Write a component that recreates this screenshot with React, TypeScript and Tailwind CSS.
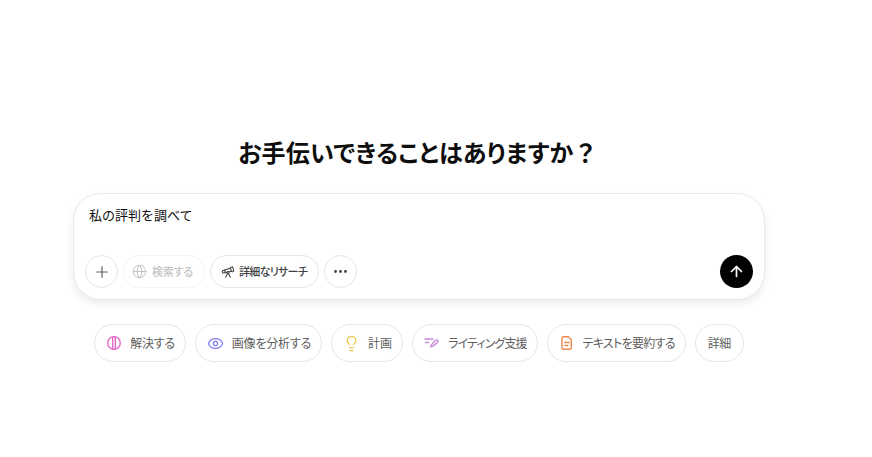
import { Plus, Globe, Telescope, Ellipsis, ArrowUp, Eye, Lightbulb } from "lucide-react";

function Chip({ icon, label, tight }: { icon?: React.ReactNode; label: string; tight?: string }) {
  return (
    <div className={`flex h-[38px] items-center gap-[8px] rounded-full border border-[#e6e6e6] bg-white ${icon ? "pl-[11px] pr-[10px]" : "px-[12px]"} text-[12px] text-[#5d5d5d]`}>
      {icon}
      <span className={tight}>{label}</span>
    </div>
  );
}

export default function App() {
  return (
    <div className="h-[457px] w-[872px] overflow-hidden bg-white font-['Noto_Sans_CJK_JP',sans-serif] text-[#0d0d0d] [font-feature-settings:'palt']">
      <div className="flex w-[838px] flex-col items-center pt-[134px]">
        <h1 className="ml-[-2px] h-[38px] text-[24px] font-semibold leading-[36px] tracking-[0.25px]">お手伝いできることはありますか<span className="[font-feature-settings:normal]">？</span></h1>
        <div className="mt-[21px] flex h-[107px] w-[692px] flex-col justify-between rounded-[28px] border border-[#e9e9e9] bg-white pb-[11px] pl-[11px] pr-[11px] pt-[11px] shadow-[0_4px_8px_rgba(0,0,0,0.08)]">
          <div className="pl-[4px] text-[13px] leading-[20px] [font-feature-settings:normal]">私の評判を調べて</div>
          <div className="flex items-center gap-[5px]">
            <div className="flex h-[33px] w-[33px] items-center justify-center rounded-full border border-[#e5e5e5]"><Plus size={18} className="text-[#5d5d5d]" strokeWidth={1.6} /></div>
            <div className="flex h-[33px] items-center gap-[5px] rounded-full border border-[#f3f3f3] pl-[8px] pr-[11px] text-[11px] font-medium text-[#c4c4c4]">
              <Globe size={15} strokeWidth={1.6} /><span className="tracking-[-0.2px]">検索する</span>
            </div>
            <div className="flex h-[33px] items-center gap-[4px] rounded-full border border-[#e5e5e5] pl-[10px] pr-[11px] text-[11px] font-medium text-[#404040]">
              <Telescope size={14} strokeWidth={1.8} className="text-[#404040]" />
              <span className="tracking-[-0.7px]">詳細なリサーチ</span>
            </div>
            <div className="flex h-[33px] w-[33px] items-center justify-center rounded-full border border-[#e5e5e5]"><Ellipsis size={17} className="text-[#404040]" strokeWidth={2} /></div>
            <div className="ml-auto flex h-[33px] w-[33px] items-center justify-center rounded-full bg-black"><ArrowUp size={17} className="text-white" strokeWidth={2.4} /></div>
          </div>
        </div>
        <div className="mt-[24px] flex gap-[9px]">
          <Chip label="解決する" tight="tracking-[-0.25px]" icon={
            <svg width="16" height="16" viewBox="0 0 16 16" fill="none" stroke="#e66bc8" strokeWidth="1.4">
              <rect x="1.800" y="1.800" width="12.400" height="12.400" rx="5.800" /><path d="M6.700 2v12M9.300 2v12" />
            </svg>} />
          <Chip label="画像を分析する" tight="tracking-[-0.2px]" icon={<Eye size={17} color="#7b7bf5" strokeWidth={1.7} />} />
          <Chip label="計画" icon={<Lightbulb size={17} color="#e8c53a" strokeWidth={1.7} />} />
          <Chip label="ライティング支援" tight="tracking-[-0.9px]" icon={
            <svg width="16" height="16" viewBox="0 0 16 16" fill="none" stroke="#c98cdb" strokeWidth="1.4" strokeLinecap="round" strokeLinejoin="round">
              <path d="M1 4h8M1.500 7.500h3" /><path d="M6.500 11.800c.3-1.500 1.500-2.800 5-6.300 1.800-1.500 3.300.2 2 1.800-2.500 2.700-4.500 4.500-7 4.500z" />
            </svg>} />
          <Chip label="テキストを要約する" tight="tracking-[-0.7px]" icon={
            <svg width="16" height="16" viewBox="0 0 16 16" fill="none" stroke="#ee8a4e" strokeWidth="1.4" strokeLinecap="round" strokeLinejoin="round">
              <path d="M4.500 1.800h4.800l3 3v8a1.500 1.500 0 0 1-1.500 1.500H4.500A1.500 1.500 0 0 1 3 12.800V3.300a1.500 1.500 0 0 1 1.500-1.500z" /><path d="M5.800 7.500h4.400M5.800 10.500h3" />
            </svg>} />
          <Chip label="詳細" tight="tracking-[-0.5px]" />
        </div>
      </div>
    </div>
  );
}
